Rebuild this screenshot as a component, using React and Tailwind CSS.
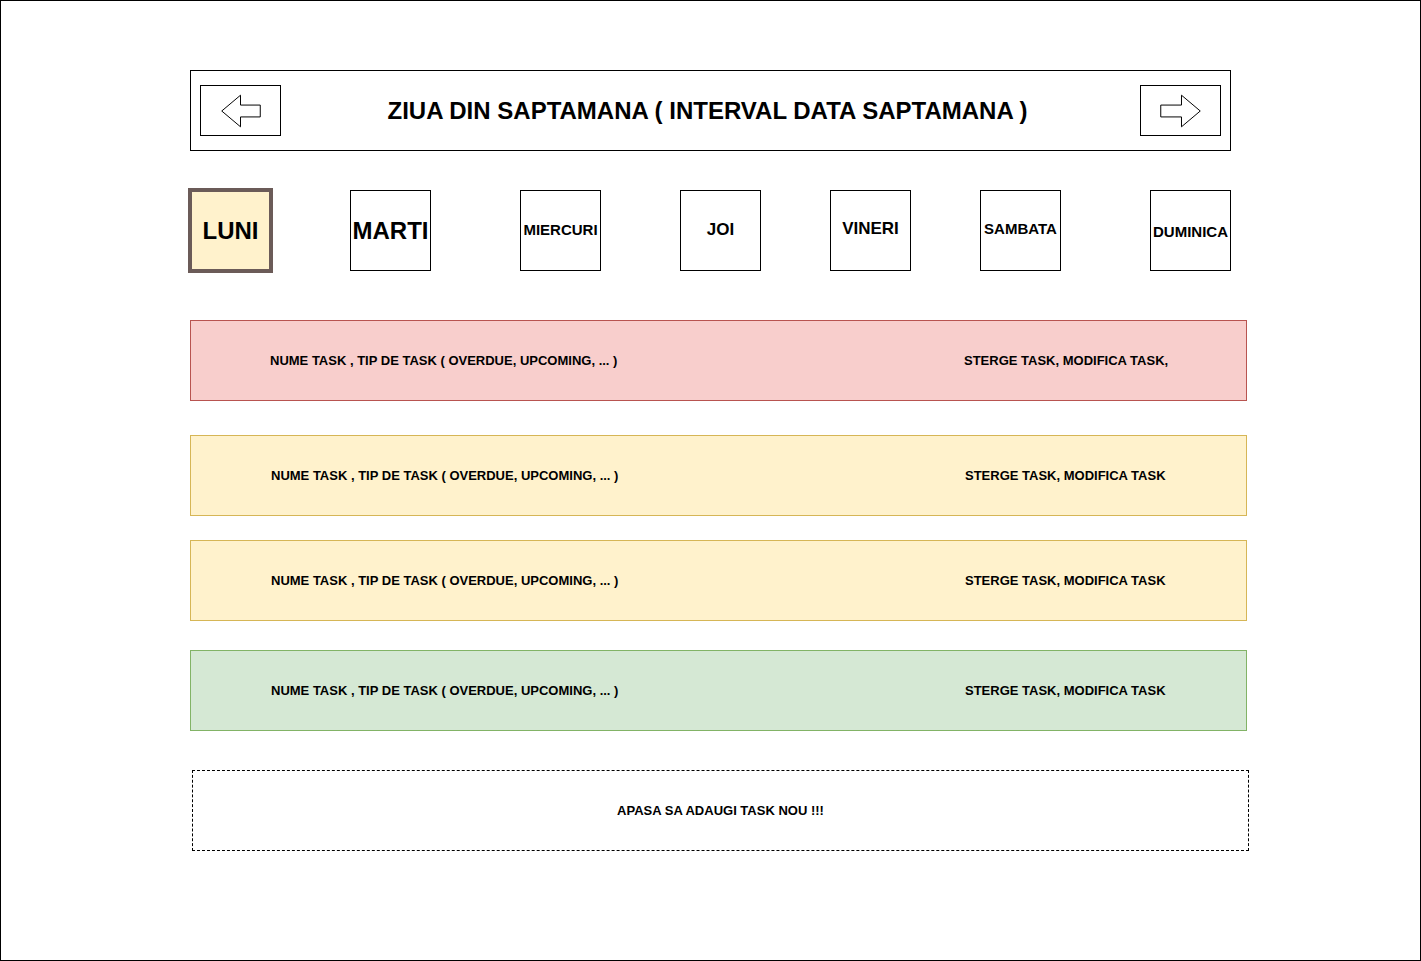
const days = [
  { name: 'LUNI', size: 'text-[24px]', gap: 'ml-[-2px]', active: true },
  { name: 'MARTI', size: 'text-[24px]', gap: 'ml-[77px]' },
  { name: 'MIERCURI', size: 'text-[15px]', gap: 'ml-[89px]' },
  { name: 'JOI', size: 'text-[17px] pb-[2px]', gap: 'ml-[79px]' },
  { name: 'VINERI', size: 'text-[17px] pb-[4px]', gap: 'ml-[69px]' },
  { name: 'SAMBATA', size: 'text-[15px] pb-[2px]', gap: 'ml-[69px]' },
  { name: 'DUMINICA', size: 'text-[15px] pt-[4px]', gap: 'ml-[89px]' },
];

const tasks = [
  { bg: 'bg-[#f8cecc] border-[#b85450]', top: 'mt-[47px]', pad: 'pl-[79px]', actions: 'STERGE TASK, MODIFICA TASK,' },
  { bg: 'bg-[#fff2cc] border-[#d6b656]', top: 'mt-[34px]', pad: 'pl-[80px]', actions: 'STERGE TASK, MODIFICA TASK' },
  { bg: 'bg-[#fff2cc] border-[#d6b656]', top: 'mt-[24px]', pad: 'pl-[80px]', actions: 'STERGE TASK, MODIFICA TASK' },
  { bg: 'bg-[#d5e8d4] border-[#82b366]', top: 'mt-[29px]', pad: 'pl-[80px]', actions: 'STERGE TASK, MODIFICA TASK' },
];

const ArrowLeft = () => (
  <svg width="80" height="50" viewBox="0 0 80 50">
    <polygon points="21,25 40,9 40,19 60,19 60,31 40,31 40,41" fill="white" stroke="black" strokeWidth="1" />
  </svg>
);

const ArrowRight = () => (
  <svg width="80" height="50" viewBox="0 0 80 50">
    <polygon points="20,19 41,19 41,9 60,25 41,41 41,31 20,31" fill="white" stroke="black" strokeWidth="1" />
  </svg>
);

const App = () => {
  return (
    <div className="w-[1421px] h-[961px] border border-black bg-white text-black font-['Liberation_Sans',Arial,sans-serif] overflow-hidden">
      <div className="pt-[69px] pl-[189px] flex flex-col">
        {/* Week header */}
        <div className="w-[1041px] h-[81px] border border-black flex items-center justify-between px-[9px]">
          <button className="w-[81px] h-[51px] border border-black flex items-center justify-center">
            <ArrowLeft />
          </button>
          <h1 className="text-[24px] font-bold leading-none pr-[6px]">ZIUA DIN SAPTAMANA ( INTERVAL DATA SAPTAMANA )</h1>
          <button className="w-[81px] h-[51px] border border-black flex items-center justify-center">
            <ArrowRight />
          </button>
        </div>

        {/* Days */}
        <div className="flex items-center h-[85px] mt-[37px]">
          {days.map((d) =>
            d.active ? (
              <div key={d.name} className={`${d.gap} w-[85px] h-[85px] border-4 border-[#6b5b58] bg-[#fff2cc] flex items-center justify-center font-bold ${d.size}`}>
                {d.name}
              </div>
            ) : (
              <div key={d.name} className={`${d.gap} w-[81px] h-[81px] border border-black flex items-center justify-center font-bold whitespace-nowrap ${d.size}`}>
                {d.name}
              </div>
            )
          )}
        </div>

        {/* Tasks */}
        {tasks.map((t, i) => (
          <div key={i} className={`${t.top} ${t.bg} ${t.pad} w-[1057px] h-[81px] border flex items-center text-[13px] font-bold`}>
            <span className="w-[694px] shrink-0">NUME TASK , TIP DE TASK ( OVERDUE, UPCOMING, ... )</span>
            <span>{t.actions}</span>
          </div>
        ))}

        <button className="mt-[39px] ml-[2px] w-[1057px] h-[81px] border border-dashed border-black flex items-center justify-center text-[13px] font-bold">
          APASA SA ADAUGI TASK NOU !!!
        </button>
      </div>
    </div>
  );
};

export default App;
